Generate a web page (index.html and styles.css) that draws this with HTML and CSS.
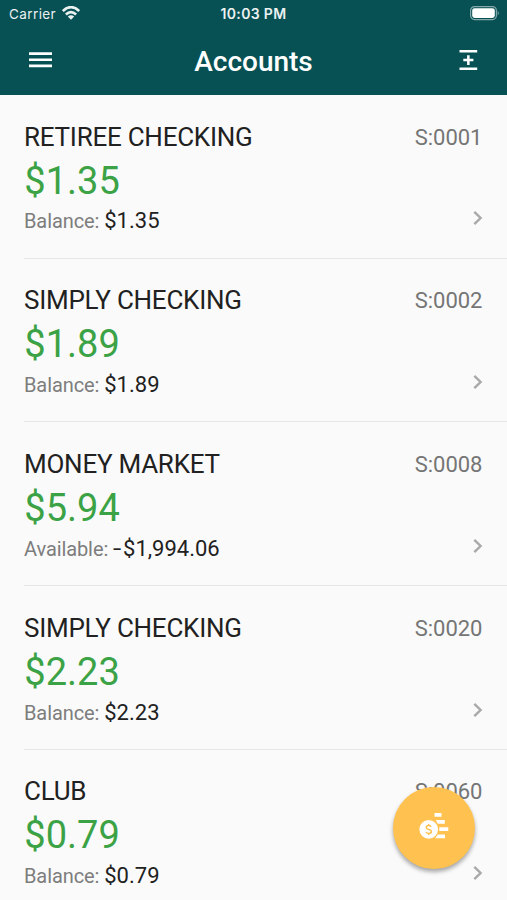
FILE: index.html
```html
<!DOCTYPE html>
<html lang="en">
<head>
<meta charset="utf-8">
<title>Accounts</title>
<link rel="stylesheet" href="styles.css">
</head>
<body>
<div class="screen">
  <header class="header">
    <div class="status">
      <div class="carrier"><span>Carrier</span>
        <svg class="wifi" width="18" height="14" viewBox="0 0 18 14" fill="none" stroke="#fff" stroke-width="2.7"><path d="M.8 5.1Q9-2.7 17.2 5.1M3.900 8.500Q9 3.700 14.100 8.500"/><path d="M5.800 10.500Q9 7.900 12.200 10.500L9 13.700Z" fill="#fff" stroke="none"/></svg>
      </div>
      <span class="time">10:03 PM</span>
      <svg class="battery" width="30" height="15" viewBox="0 0 30 15"><rect x=".6" y=".6" width="25.8" height="13" rx="4" fill="none" stroke="#fff" stroke-opacity=".5" stroke-width="1.2"/><rect x="2.2" y="2.2" width="22.6" height="9.8" rx="2.4" fill="#fff"/><path d="M27.7 4.8q2.2 2.3 0 4.6z" fill="#fff" fill-opacity=".5"/></svg>
    </div>
    <div class="toolbar">
      <svg width="23" height="17" viewBox="0 0 23 17" fill="#fff"><path d="M0 .2h23v2.700H0zM0 6.400h23v2.700H0zM0 12.600h23v2.700H0z"/></svg>
      <h1 class="title">Accounts</h1>
      <svg width="19" height="21" viewBox="0 0 19 21" fill="#fff"><path d="M.5 0H18.200v2.500H.5zM.5 17.500H18.200V20H.5zM8.100 5.200h2.500v3.600h3.800v2.500h-3.800v3.700H8.100v-3.700H4.300V8.800h3.800z"/></svg>
    </div>
  </header>
  <main class="list">
    <article class="account">
      <div class="line"><h2 class="name">RETIREE CHECKING</h2><span class="code">S:0001</span></div>
      <div class="amount">$1.35</div>
      <div class="detail"><span class="label">Balance:</span><span class="value">$1.35</span><svg class="chevron" width="10" height="16" viewBox="0 0 10 16"><path d="M1.300 1.800 7.600 8l-6.300 6.200"/></svg></div>
    </article>
    <article class="account">
      <div class="line"><h2 class="name">SIMPLY CHECKING</h2><span class="code">S:0002</span></div>
      <div class="amount">$1.89</div>
      <div class="detail"><span class="label">Balance:</span><span class="value">$1.89</span><svg class="chevron" width="10" height="16" viewBox="0 0 10 16"><path d="M1.300 1.800 7.600 8l-6.300 6.200"/></svg></div>
    </article>
    <article class="account">
      <div class="line"><h2 class="name">MONEY MARKET</h2><span class="code">S:0008</span></div>
      <div class="amount">$5.94</div>
      <div class="detail"><span class="label">Available:</span><span class="value"><span class="sign">-</span>$1,994.06</span><svg class="chevron" width="10" height="16" viewBox="0 0 10 16"><path d="M1.300 1.800 7.600 8l-6.300 6.200"/></svg></div>
    </article>
    <article class="account">
      <div class="line"><h2 class="name">SIMPLY CHECKING</h2><span class="code">S:0020</span></div>
      <div class="amount">$2.23</div>
      <div class="detail"><span class="label">Balance:</span><span class="value">$2.23</span><svg class="chevron" width="10" height="16" viewBox="0 0 10 16"><path d="M1.300 1.800 7.600 8l-6.300 6.200"/></svg></div>
    </article>
    <article class="account">
      <div class="line"><h2 class="name">CLUB</h2><span class="code">S:0060</span></div>
      <div class="amount">$0.79</div>
      <div class="detail"><span class="label">Balance:</span><span class="value">$0.79</span><svg class="chevron" width="10" height="16" viewBox="0 0 10 16"><path d="M1.300 1.800 7.600 8l-6.300 6.200"/></svg></div>
    </article>
  </main>
  <button class="fab" aria-label="Move money">
    <svg class="coins" width="30" height="28" viewBox="0 0 30 28" fill="#fff"><path d="M15.500 1h7v3.700h-7zM16.800 8h9v3.700h-7zM20.300 15.300h9V19h-9zM18.800 22.500H26v3.700h-9.800z"/><circle cx="9.700" cy="17.400" r="9.300"/><path d="M12.200 14.800q-.6-1.300-2.500-1.300-2.400 0-2.400 1.900 0 1.400 2.500 2 2.600.6 2.600 2.200 0 1.900-2.700 1.900-2.200 0-2.700-1.600M9.700 11.900v1.600M9.700 21.500v1.600" fill="none" stroke="#ffc250" stroke-width="1.500"/></svg>
  </button>
</div>
</body>
</html>
```

FILE: styles.css
```css
* { box-sizing: border-box; }
body { margin: 0; background: #fafafa; }
.screen {
  position: relative;
  width: 507px;
  height: 900px;
  overflow: hidden;
  font-family: Roboto, sans-serif;
  color: #212121;
}
.header {
  height: 95px;
  background: #075154;
  color: #fff;
}
.status {
  display: grid;
  grid-template-columns: 1fr auto 1fr;
  align-items: center;
  height: 27px;
  padding: 0 7px 0 9px;
  font: 13.5px/20px Inter, sans-serif;
}
.carrier { display: flex; align-items: center; gap: 6px; letter-spacing: .4px; opacity: .92; }
.wifi { margin-top: -2px; }
.time { margin-right: 2px; font-size: 14px; font-weight: 600; letter-spacing: .35px; opacity: .92; }
.battery { justify-self: end; }
.toolbar {
  display: flex;
  align-items: center;
  justify-content: space-between;
  height: 66px;
  padding: 0 29px;
}
.title { margin: 3px 4px 0 0; font: 500 28px/34px Roboto, sans-serif; letter-spacing: 0; }
.account {
  height: 163.7px;
  margin-left: 24px;
  padding: 26.6px 24.5px 0 0;
  border-bottom: 1px solid #e6e6e6;
}
.line { display: flex; justify-content: space-between; line-height: 31px; }
.name { margin: 0; font-size: 26px; font-weight: 400; letter-spacing: -.25px; }
.code { font-size: 22px; color: #757575; }
.amount { height: 53.9px; padding-left: .3px; font-size: 38px; line-height: 56px; color: #3ca246; }
.detail { display: flex; align-items: baseline; line-height: 30px; }
.label { margin-right: 5px; font-size: 20px; color: #7d7d7d; letter-spacing: -.1px; }
.value { font-size: 22px; }
.sign {
  display: inline-block;
  margin-right: 3.8px;
  transform: scaleX(1.35);
  transform-origin: left;
}
.chevron {
  align-self: center;
  margin: -6px 0 0 auto;
  fill: none;
  stroke: #a9a9a9;
  stroke-width: 2.4;
}
.fab {
  position: absolute;
  left: 393px;
  top: 787px;
  display: grid;
  place-items: center;
  width: 82px;
  height: 82px;
  padding: 0;
  border: 0;
  border-radius: 50%;
  background: #ffc250;
  box-shadow: 0 3px 4px rgba(0, 0, 0, .34);
}
.coins { margin-top: -4px; }
```
